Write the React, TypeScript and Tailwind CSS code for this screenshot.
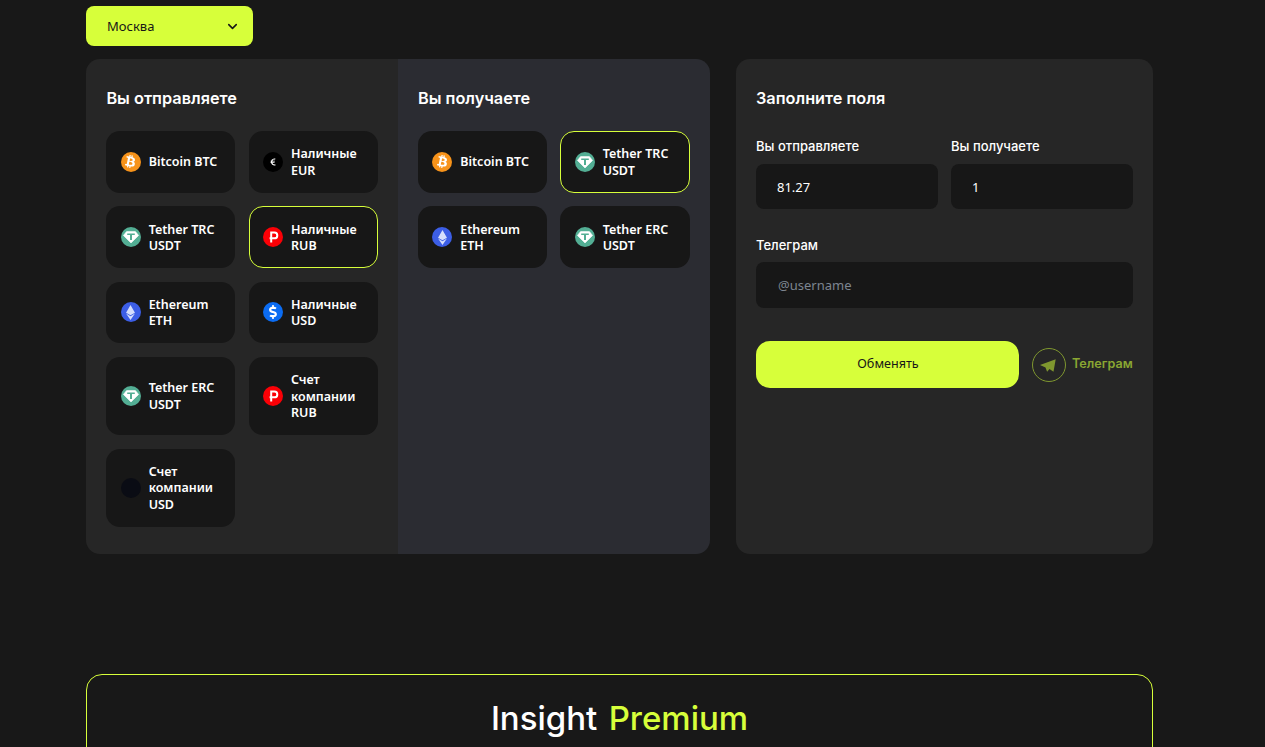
import { ChevronDown } from "lucide-react";
import { FaBtc, FaEthereum, FaDollarSign, FaEuroSign } from "react-icons/fa";
import { ReactNode } from "react";

type Coin = "btc" | "usdt" | "eth" | "eur" | "rub" | "usd" | "none";

interface Item {
  coin: Coin;
  label: string[];
  active?: boolean;
}

const SEND: Item[] = [
  { coin: "btc", label: ["Bitcoin BTC"] },
  { coin: "eur", label: ["Наличные", "EUR"] },
  { coin: "usdt", label: ["Tether TRC", "USDT"] },
  { coin: "rub", label: ["Наличные", "RUB"], active: true },
  { coin: "eth", label: ["Ethereum", "ETH"] },
  { coin: "usd", label: ["Наличные", "USD"] },
  { coin: "usdt", label: ["Tether ERC", "USDT"] },
  { coin: "rub", label: ["Счет", "компании", "RUB"] },
  { coin: "none", label: ["Счет", "компании", "USD"] },
];

const RECEIVE: Item[] = [
  { coin: "btc", label: ["Bitcoin BTC"] },
  { coin: "usdt", label: ["Tether TRC", "USDT"], active: true },
  { coin: "eth", label: ["Ethereum", "ETH"] },
  { coin: "usdt", label: ["Tether ERC", "USDT"] },
];

const HEADING = "font-['Inter',sans-serif]";

function TetherGem() {
  return (
    <svg viewBox="0 0 20 20" className="h-5 w-5">
      <path d="M5.600 4.600h8.800l3.200 3.800L10 16 2.400 8.400z" fill="#fff" stroke="#fff" strokeWidth="0.6" strokeLinejoin="round" />
      <path d="M6.200 6.400h7.600v1.500h-2.800v5H9v-5H6.200z" fill="#53ae94" />
    </svg>
  );
}

function RubleMark() {
  return (
    <svg viewBox="0 0 20 20" className="h-5 w-5">
      <path d="M8.200 15.500V5.500h3.200a2.900 2.900 0 0 1 0 5.800H6.600" fill="none" stroke="#fff" strokeWidth="2" />
    </svg>
  );
}

function CoinIcon({ coin }: { coin: Coin }) {
  const icons: Record<Coin, { bg: string; glyph: ReactNode }> = {
    btc: { bg: "bg-[#f7931a]", glyph: <FaBtc className="h-[13px] w-[13px] rotate-12 text-white" /> },
    usdt: { bg: "bg-[#53ae94]", glyph: <TetherGem /> },
    eth: { bg: "bg-[#3c5ee6]", glyph: <FaEthereum className="h-[15px] w-[15px] text-[#d5defc]" /> },
    eur: { bg: "bg-black", glyph: <FaEuroSign className="h-[8px] w-[8px] text-white" /> },
    rub: { bg: "bg-[#fb0006]", glyph: <RubleMark /> },
    usd: { bg: "bg-[#0b6cf2]", glyph: <FaDollarSign className="h-[14px] w-[14px] text-white" /> },
    none: { bg: "bg-[#0a0c14]", glyph: null },
  };
  const icon = icons[coin];
  return (
    <span className={`flex h-5 w-5 shrink-0 items-center justify-center rounded-full ${icon.bg}`}>
      {icon.glyph}
    </span>
  );
}

function CoinCard({ item }: { item: Item }) {
  return (
    <button
      className={`flex items-center gap-2 rounded-[14px] border bg-[#171717] px-[13.25px] py-[13.25px] text-left ${
        item.active ? "border-[#d7ff3a]" : "border-transparent"
      }`}
    >
      <CoinIcon coin={item.coin} />
      <span className={`text-[12.5px] leading-[16.5px] font-semibold text-white ${item.label.length > 1 ? "mt-px -mb-px" : ""}`}>
        {item.label.map((line) => (
          <span key={line} className="block">
            {line}
          </span>
        ))}
      </span>
    </button>
  );
}

function CoinColumn({ title, items, className }: { title: string; items: Item[]; className: string }) {
  return (
    <div className={`w-[312px] pt-[30px] pb-[27px] ${className}`}>
      <h2 className={`mb-[23px] text-[16.300px] leading-[19px] font-semibold text-white ${HEADING}`}>{title}</h2>
      <div className="grid grid-cols-[129px_129.5px] gap-x-[13.4px] gap-y-[13.75px]">
        {items.map((item, i) => (
          <CoinCard key={i} item={item} />
        ))}
      </div>
    </div>
  );
}

function Field({ label, children }: { label: string; children: ReactNode }) {
  return (
    <div>
      <label className={`mb-[9px] block text-[13px] leading-[17px] font-medium text-white ${HEADING}`}>{label}</label>
      {children}
    </div>
  );
}

export default function App() {
  return (
    <div className="h-[747px] overflow-hidden bg-[#181818] font-['Noto_Sans',sans-serif]">
      <div className="ml-[86px] w-[1067px] pt-[6px]">
        <button className="flex h-10 w-[167px] items-center justify-between rounded-[8px] bg-[#d7ff3a] pr-[13px] pl-[21px] text-[13px] text-[#171717]">
          <span className="pt-px">Москва</span>
          <ChevronDown className="h-[15px] w-[15px]" strokeWidth={2.5} />
        </button>

        <div className="mt-[13px] flex h-[495px] gap-[26px]">
          <div className="flex w-[624px] overflow-hidden rounded-[14px]">
            <CoinColumn title="Вы отправляете" items={SEND} className="bg-[#262626] pl-[20.4px]" />
            <CoinColumn title="Вы получаете" items={RECEIVE} className="bg-[#2b2c32] pl-5" />
          </div>

          <div className="w-[417px] rounded-[14px] bg-[#262626] px-5 pt-[30px]">
            <h2 className={`mb-[30px] text-[16.300px] leading-[19px] font-semibold text-white ${HEADING}`}>Заполните поля</h2>
            <div className="grid grid-cols-[182px_182px] gap-x-[13px]">
              <Field label="Вы отправляете">
                <input readOnly value="81.27" className="h-[45px] w-full rounded-[8px] bg-[#171717] px-[21px] text-[13px] text-white outline-none" />
              </Field>
              <Field label="Вы получаете">
                <input readOnly value="1" className="h-[45px] w-full rounded-[8px] bg-[#171717] px-[21px] text-[13px] text-white outline-none" />
              </Field>
            </div>
            <div className="mt-[28px]">
              <label className={`mb-2 block text-[13px] leading-[17px] font-medium text-white ${HEADING}`}>Телеграм</label>
              <input
                readOnly
                placeholder="@username"
                className="h-[46px] w-full rounded-[8px] bg-[#171717] pr-[21px] pl-[22px] text-[13px] text-white outline-none placeholder:text-[#7d8590]"
              />
            </div>
            <div className="mt-[33px] flex items-center">
              <button className="h-[47px] w-[263px] shrink-0 rounded-[14px] bg-[#d7ff3a] pl-[1px] text-[12.6px] text-[#171717]">Обменять</button>
              <a className="ml-[13px] flex items-center gap-[6px]">
                <span className="flex h-[34px] w-[34px] shrink-0 items-center justify-center rounded-full border border-[#7f972f]">
                  <svg viewBox="0 0 32 32" className="h-8 w-8">
                    <path d="M22.700 10.300 7 16l5.500 2.400 1.600 4.400 2.400-2.800 4 2.700z" fill="#7f972f" />
                  </svg>
                </span>
                <span className={`text-[12.6px] font-semibold whitespace-nowrap text-[#8aa632] ${HEADING}`}>Телеграм</span>
              </a>
            </div>
          </div>
        </div>

        <section className="mt-[120px] h-[200px] rounded-[16px] border border-[#d7ff3a] pt-[21px] text-center">
          <h2 className={`text-[33px] leading-[44px] font-medium [word-spacing:2.5px] text-white ${HEADING}`}>
            Insight <span className="text-[#d7ff3a]">Premium</span>
          </h2>
        </section>
      </div>
    </div>
  );
}
